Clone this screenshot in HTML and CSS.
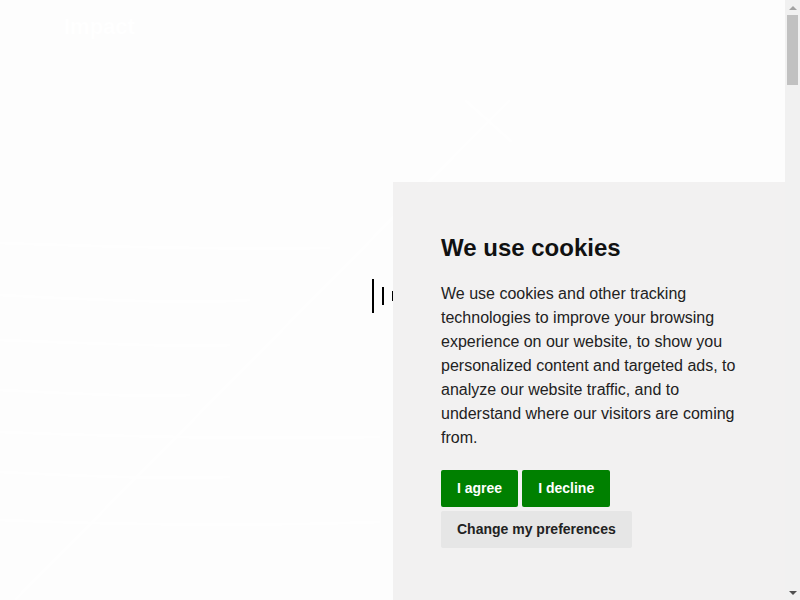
FILE: index.html
```html
<!DOCTYPE html>
<html lang="en">
<head>
<meta charset="utf-8">
<title>Cookies</title>
<link rel="stylesheet" href="styles.css">
</head>
<body>
<div class="page">
  <svg class="bg-lines" width="785" height="600" viewBox="0 0 785 600" aria-hidden="true">
    <g stroke="#ffffff" stroke-width="3" fill="none">
      <path d="M0 243 Q200 250 330 248"/>
      <path d="M0 295 Q180 305 250 300"/>
      <path d="M0 340 Q200 348 230 345"/>
      <path d="M0 390 Q150 398 190 395"/>
      <path d="M0 432 Q200 440 380 437"/>
      <path d="M0 472 Q150 480 230 477"/>
      <path d="M0 520 Q200 528 380 522"/>
      <path d="M15 600 L460 150 L510 100"/>
      <path d="M465 100 L512 142"/>
    </g>
  </svg>
  <div class="logo">Impact</div>
</div>
<div class="loader" aria-hidden="true">
  <span class="bar bar-lg"></span>
  <span class="bar bar-md"></span>
  <span class="bar bar-sm"></span>
</div>
<section class="cookie-panel">
  <h2 class="cookie-title">We use cookies</h2>
  <p class="cookie-text">We use cookies and other tracking technologies to improve your browsing experience on our website, to show you personalized content and targeted ads, to analyze our website traffic, and to understand where our visitors are coming from.</p>
  <div class="cookie-actions">
    <button class="btn btn-green">I agree</button>
    <button class="btn btn-green">I decline</button>
    <button class="btn btn-grey">Change my preferences</button>
  </div>
</section>
<div class="scrollbar" aria-hidden="true">
  <span class="arrow arrow-up"></span>
  <div class="track"><span class="thumb"></span></div>
  <span class="arrow arrow-down"></span>
</div>
</body>
</html>
```

FILE: styles.css
```css
html, body {
  margin: 0;
  padding: 0;
  height: 100%;
  overflow: hidden;
}
body {
  background: #fdfdfd;
  font-family: "Liberation Sans", Arial, sans-serif;
}
.page {
  position: relative;
  height: 100%;
  margin-right: 15px;
}
.bg-lines {
  position: absolute;
  left: 0;
  top: 0;
  opacity: 0.7;
}
.logo {
  position: absolute;
  left: 64px;
  top: 14px;
  color: #ffffff;
  font-size: 22px;
  font-weight: bold;
}
.loader {
  position: fixed;
  left: 372px;
  top: 279px;
  height: 34px;
  display: flex;
  align-items: center;
  gap: 8px;
}
.bar {
  display: block;
  width: 2px;
  background: #000;
}
.bar-lg { height: 34px; }
.bar-md { height: 18px; }
.bar-sm { height: 10px; }
.cookie-panel {
  position: fixed;
  right: 15px;
  bottom: 0;
  width: 392px;
  box-sizing: border-box;
  background: #f2f1f1;
  padding: 48px 40px 52px 48px;
  color: #222;
}
.cookie-title {
  margin: 3px 0 19px;
  font-size: 24px;
  line-height: 30px;
  font-weight: bold;
  color: #111;
}
.cookie-text {
  margin: 0 0 20px;
  font-size: 16px;
  line-height: 24px;
  color: #222;
}
.cookie-actions {
  display: flex;
  flex-wrap: wrap;
  gap: 4px;
}
.btn {
  border: none;
  border-radius: 2px;
  padding: 10px 16px;
  font-family: "Liberation Sans", Arial, sans-serif;
  font-size: 14px;
  line-height: 17px;
  font-weight: bold;
  cursor: pointer;
}
.btn-green {
  background: #008000;
  color: #fff;
}
.btn-grey {
  background: #e6e6e6;
  color: #222;
}
.scrollbar {
  position: fixed;
  top: 0;
  right: 0;
  width: 15px;
  height: 100%;
  background: #f1f1f1;
  display: flex;
  flex-direction: column;
}
.arrow {
  display: flex;
  height: 15px;
  flex: none;
  align-items: center;
  justify-content: center;
}
.arrow::before {
  content: "";
  width: 0;
  height: 0;
  border-left: 4px solid transparent;
  border-right: 4px solid transparent;
}
.arrow-up::before {
  border-bottom: 4px solid #a3a3a3;
}
.arrow-down::before {
  border-top: 4px solid #505050;
}
.track {
  flex: 1;
  padding: 0 2px;
}
.thumb {
  display: block;
  height: 70px;
  background: #c1c1c1;
}
```
